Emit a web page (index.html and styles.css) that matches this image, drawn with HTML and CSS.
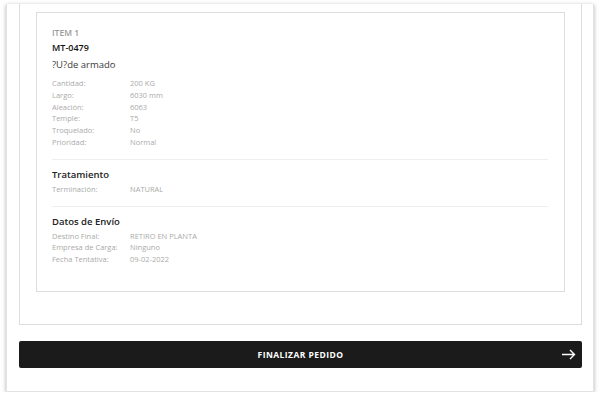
FILE: index.html
```html
<!DOCTYPE html>
<html lang="es">
<head>
    <meta charset="UTF-8">
    <title>Pedido</title>
    <link rel="stylesheet" href="styles.css">
</head>
<body>
<div class="card">
    <div class="panel">
        <div class="item">
            <div class="item-num">ITEM 1</div>
            <div class="item-code">MT-0479</div>
            <div class="item-name">?U?de armado</div>
            <ul class="rows">
                <li><span class="label">Cantidad:</span><span class="value">200 KG</span></li>
                <li><span class="label">Largo:</span><span class="value">6030 mm</span></li>
                <li><span class="label">Aleación:</span><span class="value">6063</span></li>
                <li><span class="label">Temple:</span><span class="value">T5</span></li>
                <li><span class="label">Troquelado:</span><span class="value">No</span></li>
                <li><span class="label">Prioridad:</span><span class="value">Normal</span></li>
            </ul>
            <div class="section">
                <div class="section-title">Tratamiento</div>
                <ul class="rows">
                    <li><span class="label">Terminación:</span><span class="value">NATURAL</span></li>
                </ul>
            </div>
            <div class="section">
                <div class="section-title">Datos de Envío</div>
                <ul class="rows">
                    <li><span class="label">Destino Final:</span><span class="value">RETIRO EN PLANTA</span></li>
                    <li><span class="label">Empresa de Carga:</span><span class="value">Ninguno</span></li>
                    <li><span class="label">Fecha Tentativa:</span><span class="value">09-02-2022</span></li>
                </ul>
            </div>
        </div>
    </div>
    <button class="submit">
        <span>FINALIZAR PEDIDO</span>
        <svg class="arrow" width="15" height="11" viewBox="0 0 15 11">
            <path d="M1 5.5H13.5M9 1L13.5 5.5L9 10" fill="none" stroke="#fff" stroke-width="1.4"/>
        </svg>
    </button>
</div>
</body>
</html>
```

FILE: styles.css
```css
*{
    margin: 0;
    padding: 0;
    box-sizing: border-box;
}
ul{
    list-style: none;
}
body{
    background: #fff;
    font-family: "Open Sans", "Noto Sans", sans-serif;
    color: #222;
}
.card{
    margin: 4px 6px 0;
    height: 388px;
    background: #fff;
    border: 1px solid #e2e2e2;
    border-top: none;
    box-shadow: 0 1px 4px rgba(0,0,0,.3);
    padding: 0 11px 0 12px;
}
.panel{
    border: 1px solid #ddd;
    border-top: none;
    padding: 8px 16px 32px 16px;
}
.item{
    border: 1px solid #ddd;
    padding: 13px 16px 25px 15px;
}
.item-num{
    font-size: 8.5px;
    font-weight: 600;
    color: #9a9a9a;
    line-height: 14px;
}
.item-code{
    font-size: 9px;
    font-weight: 600;
    color: #111;
    line-height: 16px;
}
.item-name{
    font-size: 9.5px;
    color: #3a3a3a;
    line-height: 17px;
    margin-bottom: 5px;
}
.rows li{
    display: flex;
    font-size: 7.5px;
    line-height: 11.8px;
    color: #aaa;
}
.rows .label{
    width: 78px;
}
.section{
    border-top: 1px solid #eee;
    margin-top: 10px;
    padding-top: 8px;
}
.section-title{
    font-size: 9.5px;
    font-weight: 600;
    color: #222;
    line-height: 14px;
    margin-bottom: 2px;
}
.submit{
    margin-top: 16px;
    width: 100%;
    height: 27px;
    background: #1b1b1b;
    border: none;
    border-radius: 2px;
    color: #fff;
    font-family: "Open Sans", "Noto Sans", sans-serif;
    font-size: 8.5px;
    font-weight: 700;
    letter-spacing: .45px;
    position: relative;
    display: flex;
    align-items: center;
    justify-content: center;
}
.submit .arrow{
    position: absolute;
    right: 6px;
    top: 8px;
}
```
